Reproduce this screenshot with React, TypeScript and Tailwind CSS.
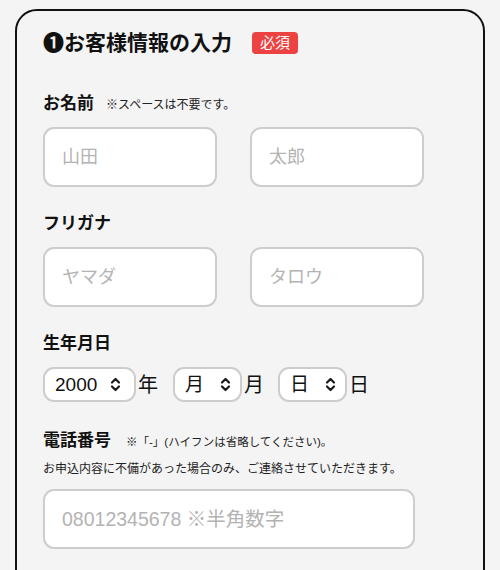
import React from 'react';

const FONT = '"Liberation Sans", "Noto Sans CJK JP", sans-serif';

const Chevrons: React.FC = () => (
  <svg width="11" height="15" viewBox="0 0 11 15" fill="none" className="shrink-0">
    <path d="M2 5.5 L5.5 2 L9 5.5" stroke="#1a1a1a" strokeWidth="2.2" strokeLinecap="round" strokeLinejoin="round" />
    <path d="M2 9.5 L5.5 13 L9 9.5" stroke="#1a1a1a" strokeWidth="2.2" strokeLinecap="round" strokeLinejoin="round" />
  </svg>
);

const TextField: React.FC<{ placeholder: string; className?: string }> = ({ placeholder, className }) => (
  <input
    type="text"
    placeholder={placeholder}
    className={`h-[60px] rounded-[11px] border-2 border-[#cdcdcd] bg-white pl-[17px] text-[#222] placeholder:text-[#b3b3b3] outline-none ${className ?? ''}`}
  />
);

const SelectBox: React.FC<{ value: string; width: string; gap: string }> = ({ value, width, gap }) => (
  <div className={`flex h-[35px] items-center rounded-[11px] border-2 border-[#cdcdcd] bg-white pl-[10px] ${width}`}>
    <span className={`text-[19px] leading-none text-[#111] ${gap}`}>{value}</span>
    <Chevrons />
  </div>
);

const Label: React.FC<{ children: React.ReactNode }> = ({ children }) => (
  <span className="text-[17px] font-bold leading-[24px] text-[#111]">{children}</span>
);

export default function App() {
  return (
    <div className="h-[570px] w-[500px] overflow-hidden bg-[#f4f4f4] pt-[9px] pl-[15px]" style={{ fontFamily: FONT }}>
      <div className="h-[600px] w-[470px] rounded-[22px] border-2 border-[#111] bg-[#f4f4f4] px-[26px] pt-[21px]">
        {/* title */}
        <div className="flex h-[22px] items-center">
          <h2 className="text-[21px] font-bold leading-[22px] text-[#111]">❶お客様情報の入力</h2>
          <span className="ml-[20px] rounded-[4px] bg-[#ec4242] px-[8px] text-[15px] leading-[22px] text-white">必須</span>
        </div>

        {/* name */}
        <div className="mt-[38px] flex items-baseline">
          <Label>お名前</Label>
          <span className="ml-[12px] text-[12px] text-[#222]">※スペースは不要です。</span>
        </div>
        <div className="mt-[11px] flex gap-[33px]">
          <TextField placeholder="山田" className="w-[174px] text-[18px]" />
          <TextField placeholder="太郎" className="w-[174px] text-[18px]" />
        </div>

        {/* kana */}
        <div className="mt-[25px] flex">
          <Label>フリガナ</Label>
        </div>
        <div className="mt-[11px] flex gap-[33px]">
          <TextField placeholder="ヤマダ" className="w-[174px] text-[18px]" />
          <TextField placeholder="タロウ" className="w-[174px] text-[18px]" />
        </div>

        {/* birthday */}
        <div className="mt-[25px] flex">
          <Label>生年月日</Label>
        </div>
        <div className="mt-[11px] flex items-center text-[20px] text-[#111]">
          <SelectBox value="2000" width="w-[93px]" gap="mr-[13px]" />
          <span className="ml-[2px] leading-none">年</span>
          <div className="ml-[15px]">
            <SelectBox value="月" width="w-[69px]" gap="mr-[16px]" />
          </div>
          <span className="ml-[2px] leading-none">月</span>
          <div className="ml-[14px]">
            <SelectBox value="日" width="w-[69px]" gap="mr-[16px]" />
          </div>
          <span className="ml-[2px] leading-none">日</span>
        </div>

        {/* phone */}
        <div className="mt-[27px] flex items-baseline">
          <Label>電話番号</Label>
          <span className="ml-[15px] text-[11.5px] text-[#222]">※「-」(ハイフンは省略してください)。</span>
        </div>
        <p className="mt-[7px] text-[12px] leading-[18px] text-[#222]">
          お申込内容に不備があった場合のみ、ご連絡させていただきます。
        </p>
        <div className="mt-[11px] flex">
          <TextField placeholder="08012345678 ※半角数字" className="w-[372px] text-[19.5px]" />
        </div>
      </div>
    </div>
  );
}
